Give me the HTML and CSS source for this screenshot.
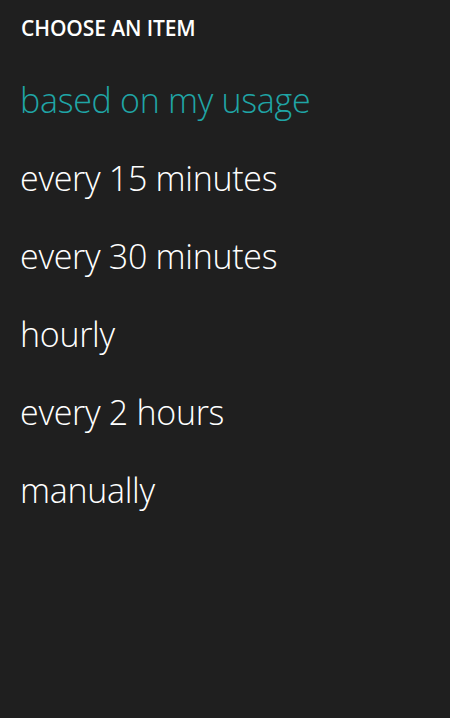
FILE: index.html
```html
<!DOCTYPE html>
<html>
<head>
<meta charset="utf-8">
<link rel="stylesheet" href="styles.css">
</head>
<body>
<div class="picker">
  <div class="title">CHOOSE AN ITEM</div>
  <ul class="items">
    <li class="item selected">based on my usage</li>
    <li class="item">every 15 minutes</li>
    <li class="item">every 30 minutes</li>
    <li class="item">hourly</li>
    <li class="item">every 2 hours</li>
    <li class="item">manually</li>
  </ul>
</div>
</body>
</html>
```
FILE: styles.css
```css
html, body {
  margin: 0;
  padding: 0;
  background: #1f1f1f;
  height: 100%;
}
.picker {
  padding: 13px 0 0 20px;
  font-family: "Open Sans", "Noto Sans", sans-serif;
  color: #ffffff;
}
.title {
  font-size: 21px;
  font-weight: 600;
  line-height: 30px;
  letter-spacing: -0.1px;
  padding-left: 1px;
}
.items {
  list-style: none;
  margin: 0;
  padding: 0;
  margin-top: 37px;
}
.item {
  font-size: 34px;
  font-weight: 300;
  line-height: 40px;
  margin-bottom: 38px;
  letter-spacing: -0.3px;
}
.selected {
  color: #1fa5a6;
}
```
